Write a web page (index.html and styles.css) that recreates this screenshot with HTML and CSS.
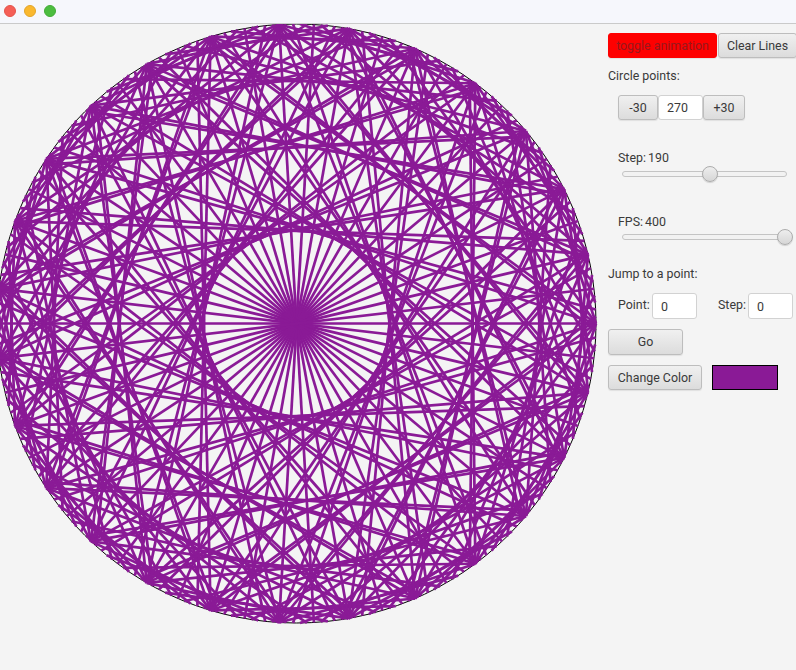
FILE: index.html
```html
<!DOCTYPE html>
<html lang="en">
<head>
<meta charset="utf-8">
<title>Circle Lines</title>
<link rel="stylesheet" href="styles.css">
</head>
<body>
<header class="titlebar">
  <span class="light light-close"></span>
  <span class="light light-min"></span>
  <span class="light light-max"></span>
</header>
<main class="window">
  <div class="stage"><canvas id="art" class="art" width="598" height="646"></canvas></div>
  <aside class="panel">
    <div class="row top-row">
      <button class="btn btn-toggle">toggle animation</button>
      <button class="btn btn-clear">Clear Lines</button>
    </div>
    <div class="label label-circle">Circle points:</div>
    <div class="row stepper">
      <button class="btn btn-minus">-30</button>
      <input class="field field-points" value="270">
      <button class="btn btn-plus">+30</button>
    </div>
    <div class="slider-group slider-step">
      <div class="label">Step: 190</div>
      <div class="track"><span class="thumb thumb-step"></span></div>
    </div>
    <div class="slider-group slider-fps">
      <div class="label">FPS: 400</div>
      <div class="track"><span class="thumb thumb-fps"></span></div>
    </div>
    <div class="label label-jump">Jump to a point:</div>
    <div class="row jump-row">
      <span class="label label-point">Point:</span>
      <input class="field field-jump" value="0">
      <span class="label label-step2">Step:</span>
      <input class="field field-jump" value="0">
    </div>
    <button class="btn btn-go">Go</button>
    <div class="row color-row">
      <button class="btn btn-color">Change Color</button>
      <span class="swatch"></span>
    </div>
  </aside>
</main>
<script src="app.js"></script>
</body>
</html>
```
FILE: styles.css
```css
* { box-sizing: border-box; }
html, body { margin: 0; height: 100%; overflow: hidden; }
body {
  width: 796px; height: 670px; background: #f4f4f4; color: #3a3a3a;
  font: 12.4px/16px Roboto, "Liberation Sans", sans-serif;
}
.titlebar {
  height: 24px; background: #f6f7fc; border-bottom: 1px solid #cacaca;
  display: flex; align-items: center; gap: 8px; padding: 0 0 1px 4px;
}
.light { width: 12px; height: 12px; border-radius: 50%; }
.light-close { background: #f55f57; border: 1px solid #e5534b; }
.light-min { background: #fab82f; border: 1px solid #e3a52a; }
.light-max { background: #4cbd3f; border: 1px solid #43ac37; }
.window { display: flex; height: 646px; }
.stage { width: 598px; flex: none; }
.art { display: block; }
.panel { flex: none; width: 198px; padding: 9px 0 0 10px; display: flex; flex-direction: column; align-items: flex-start; }
.row { display: flex; align-items: center; }
.btn {
  font: inherit; color: #3a3a3a; height: 25px; padding: 0; margin: 0; border: 1px solid #bdbdbd; border-radius: 3px;
  background: linear-gradient(#f0f0f0, #dcdcdc); box-shadow: 0 1px 1px rgba(0,0,0,.08);
}
.top-row { width: 188px; flex: none; gap: 1px; }
.btn-toggle { width: 109px; flex: none; background: #fe0000; border-color: #f00; color: #98181c; }
.btn-clear { width: 79px; flex: none; }
.label-circle { margin-top: 10px; }
.stepper { margin: 11px 0 0 10px; }
.btn-minus { width: 40px; }
.btn-plus { width: 42px; }
.field {
  font: inherit; color: #3a3a3a; height: 25px; border: 1px solid #d2d2d2; border-radius: 3px; background: #fff;
  padding: 0 0 0 8px; outline: none; margin: 0;
}
.field-points { width: 45px; text-align: left; }
.slider-group { margin-left: 10px; width: 175px; }
.slider-group .label { word-spacing: -1px; }
.slider-step { margin-top: 30px; }
.slider-fps { margin-top: 37px; }
.slider-fps .track { margin-top: 4px; }
.track {
  position: relative; width: 165px; height: 6px; margin: 5px 0 0 4px;
  border: 1px solid #c4c4c4; border-radius: 3px; background: #f2f2f2;
}
.thumb {
  position: absolute; top: -6px; width: 16px; height: 16px; border-radius: 50%;
  border: 1px solid #acacac; background: linear-gradient(#eeeeee, #d6d6d6); box-shadow: 0 1px 1px rgba(0,0,0,.15);
}
.thumb-step { left: 79px; }
.thumb-fps { left: 154px; }
.label-jump { margin-top: 26px; }
.jump-row { margin: 11px 0 0 10px; }
.field-jump { width: 45px; height: 26px; }
.label-point { width: 34px; }
.label-step2 { margin-left: 21px; width: 30px; }
.jump-row .label { position: relative; top: -1px; }
.btn-go { width: 75px; height: 26px; margin-top: 10px; }
.color-row { margin-top: 10px; gap: 10px; }
.btn-color { width: 94px; }
.swatch { width: 66px; height: 25px; background: #8a1a96; border: 1px solid #000; }
```
FILE: app.js
```js
var c = document.getElementById('art').getContext('2d');
var cx = 296.5, cy = 299.5, r = 299.5, n = 270, k = 190;
c.strokeStyle = '#000'; c.lineWidth = 1;
c.beginPath(); c.arc(cx, cy, r, 0, Math.PI * 2); c.stroke();
c.strokeStyle = '#8a1a96'; c.lineWidth = 2.7;
function pt(i) { var a = i / n * Math.PI * 2; return [cx + r * Math.cos(a), cy + r * Math.sin(a)]; }
for (var i = 0; i < n; i++) {
  var p = pt(i), q = pt((i * k) % n);
  c.beginPath(); c.moveTo(p[0], p[1]); c.lineTo(q[0], q[1]); c.stroke();
}
```
